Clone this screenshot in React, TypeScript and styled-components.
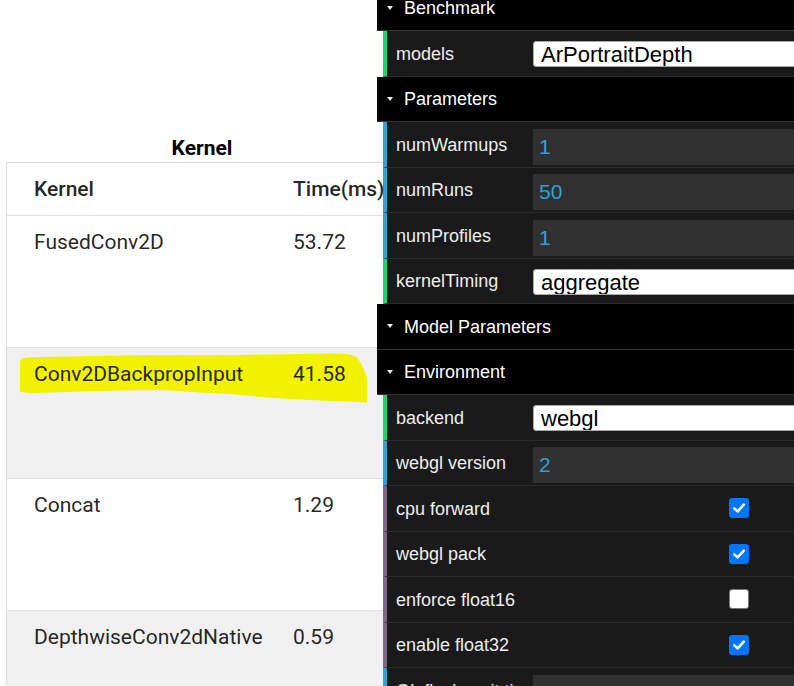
import React from 'react';
import styled, { createGlobalStyle } from 'styled-components';

const Global = createGlobalStyle`
  html, body { margin: 0; padding: 0; background: #fff; overflow: hidden; }
  #root { width: 794px; height: 686px; }
`;

const Page = styled.div`
  position: relative;
  width: 794px;
  height: 686px;
  overflow: hidden;
  font-family: Roboto, "Liberation Sans", sans-serif;
`;

const Report = styled.section`
  width: 392px;
  padding: 136px 0 0 6px;
`;

const Caption = styled.h2`
  margin: 0 0 2px;
  font-family: Roboto, "Liberation Sans", sans-serif;
  font-weight: bold;
  font-size: 21px;
  line-height: 24px;
  text-align: center;
  color: #000;
`;

const Table = styled.div`
  border-left: 1px solid #ddd;
  border-top: 1px solid #ddd;
`;

const Row = styled.div<{ $head?: boolean; $shade?: boolean }>`
  position: relative;
  display: grid;
  grid-template-columns: 259px 1fr;
  height: ${(p) => (p.$head ? '52px' : '130.7px')};
  border-bottom: 1px solid #e0e0e0;
  background: ${(p) => (p.$shade ? '#f0f0f0' : '#fff')};
`;

const Cell = styled.div<{ $head?: boolean }>`
  position: relative;
  z-index: 1;
  display: flex;
  align-items: ${(p) => (p.$head ? 'center' : 'flex-start')};
  padding: ${(p) => (p.$head ? '0 0 0 27px' : '14px 0 0 27px')};
  font-size: 21px;
  font-weight: ${(p) => (p.$head ? 500 : 400)};
  color: rgba(0, 0, 0, 0.87);
  white-space: nowrap;
`;

const Marker = styled.svg`
  position: absolute;
  left: 0;
  top: 0;
  width: 380px;
  height: 70px;
  overflow: visible;
  z-index: 0;
`;

const Gui = styled.aside`
  position: absolute;
  top: -14.5px;
  left: 377px;
  width: 540px;
  font-family: "Liberation Sans", Arial, sans-serif;
  font-size: 18px;
  color: #eee;
`;

const FolderTitle = styled.div`
  display: flex;
  align-items: center;
  height: 42.5px;
  padding: 2px 0 0 10px;
  background: #000;
  border-bottom: 1px solid #333;
  color: #fff;
  &::before {
    content: '';
    border-left: 3px solid transparent;
    border-right: 3px solid transparent;
    border-top: 4px solid #eee;
    margin: -2px 11px 0 0;
  }
`;

const Props = styled.div`
  margin-left: 6px;
`;

const kindColor = {
  string: '#1ed36f',
  number: '#2fa1d6',
  boolean: '#806787',
} as const;

type Kind = keyof typeof kindColor;

const Prop = styled.div<{ $kind: Kind }>`
  display: grid;
  grid-template-columns: 146px 1fr;
  align-items: center;
  height: 44.5px;
  border-left: 4px solid ${(p) => kindColor[p.$kind]};
  border-bottom: 1px solid #2c2c2c;
  background: #1a1a1a;
`;

const Label = styled.span`
  padding: 2px 0 0 9px;
  white-space: nowrap;
  overflow: hidden;
  text-overflow: ellipsis;
`;

const NumField = styled.input`
  align-self: start;
  margin: 6.5px 0 0;
  width: 100%;
  height: 36px;
  box-sizing: border-box;
  padding: 0 6px;
  border: none;
  outline: none;
  background: #303030;
  color: #2fa1d6;
  font-family: "Liberation Sans", Arial, sans-serif;
  font-size: 21px;
`;

const Choice = styled.select`
  appearance: none;
  align-self: start;
  margin: 10px 0 0;
  width: 100%;
  height: 26px;
  box-sizing: border-box;
  padding: 0 7px;
  border: 1px solid #a8a8a8;
  border-radius: 3px;
  background: #fff;
  color: #000;
  font-family: "Liberation Sans", Arial, sans-serif;
  font-size: 22px;
  outline: none;
`;

const Tick = styled.span<{ $on: boolean }>`
  display: flex;
  align-items: center;
  justify-content: center;
  margin-left: 196px;
  width: 20px;
  height: 20px;
  box-sizing: border-box;
  border-radius: 3px;
  background: ${(p) => (p.$on ? '#0075ff' : '#fff')};
  border: ${(p) => (p.$on ? 'none' : '1.5px solid #767676')};
`;

const rows = [
  { k: 'FusedConv2D', t: '53.72' },
  { k: 'Conv2DBackpropInput', t: '41.58', mark: true },
  { k: 'Concat', t: '1.29' },
  { k: 'DepthwiseConv2dNative', t: '0.59' },
];

function Checkbox({ on }: { on: boolean }) {
  return (
    <Tick $on={on}>
      {on && (
        <svg width="14" height="14" viewBox="0 0 14 14">
          <polyline
            points="2.3,7.4 5.6,10.4 11.8,3.6"
            fill="none"
            stroke="#fff"
            strokeWidth="2.6"
            strokeLinecap="round"
            strokeLinejoin="round"
          />
        </svg>
      )}
    </Tick>
  );
}

export default function App() {
  return (
    <Page>
      <Global />
      <Report>
        <Caption>Kernel</Caption>
        <Table>
          <Row $head>
            <Cell $head>Kernel</Cell>
            <Cell $head>Time(ms)</Cell>
          </Row>
          {rows.map((r, i) => (
            <Row key={r.k} $shade={i % 2 === 1}>
              {r.mark && (
                <Marker viewBox="0 0 380 70">
                  <g transform="translate(-7,-347.7)">
                    <path
                      d="M20,362 Q20,357 33,357 L133,355 L233,354.7 L333,353.3 Q355,352 359,360 L363,367 L367,378 L367,402.3 L333,400.7 L300,399.3 L267,397.3 L233,394 L200,392.3 L167,390 L133,390 L100,390.7 L67,391.7 L33,392.7 L20,391.7 Z"
                      fill="#f1f100"
                    />
                  </g>
                </Marker>
              )}
              <Cell>{r.k}</Cell>
              <Cell>{r.t}</Cell>
            </Row>
          ))}
        </Table>
      </Report>

      <Gui>
        <FolderTitle>Benchmark</FolderTitle>
        <Props>
          <Prop $kind="string">
            <Label>models</Label>
            <Choice defaultValue="ArPortraitDepth">
              <option>ArPortraitDepth</option>
            </Choice>
          </Prop>
        </Props>
        <FolderTitle>Parameters</FolderTitle>
        <Props>
          <Prop $kind="number">
            <Label>numWarmups</Label>
            <NumField defaultValue="1" />
          </Prop>
          <Prop $kind="number">
            <Label>numRuns</Label>
            <NumField defaultValue="50" />
          </Prop>
          <Prop $kind="number">
            <Label>numProfiles</Label>
            <NumField defaultValue="1" />
          </Prop>
          <Prop $kind="string">
            <Label>kernelTiming</Label>
            <Choice defaultValue="aggregate">
              <option>aggregate</option>
            </Choice>
          </Prop>
        </Props>
        <FolderTitle>Model Parameters</FolderTitle>
        <FolderTitle>Environment</FolderTitle>
        <Props>
          <Prop $kind="string">
            <Label>backend</Label>
            <Choice defaultValue="webgl">
              <option>webgl</option>
            </Choice>
          </Prop>
          <Prop $kind="number">
            <Label>webgl version</Label>
            <NumField defaultValue="2" />
          </Prop>
          <Prop $kind="boolean">
            <Label>cpu forward</Label>
            <Checkbox on />
          </Prop>
          <Prop $kind="boolean">
            <Label>webgl pack</Label>
            <Checkbox on />
          </Prop>
          <Prop $kind="boolean">
            <Label>enforce float16</Label>
            <Checkbox on={false} />
          </Prop>
          <Prop $kind="boolean">
            <Label>enable float32</Label>
            <Checkbox on />
          </Prop>
          <Prop $kind="number">
            <Label>GL flush wait time(ms)</Label>
            <NumField defaultValue="-1" />
          </Prop>
        </Props>
      </Gui>
    </Page>
  );
}
